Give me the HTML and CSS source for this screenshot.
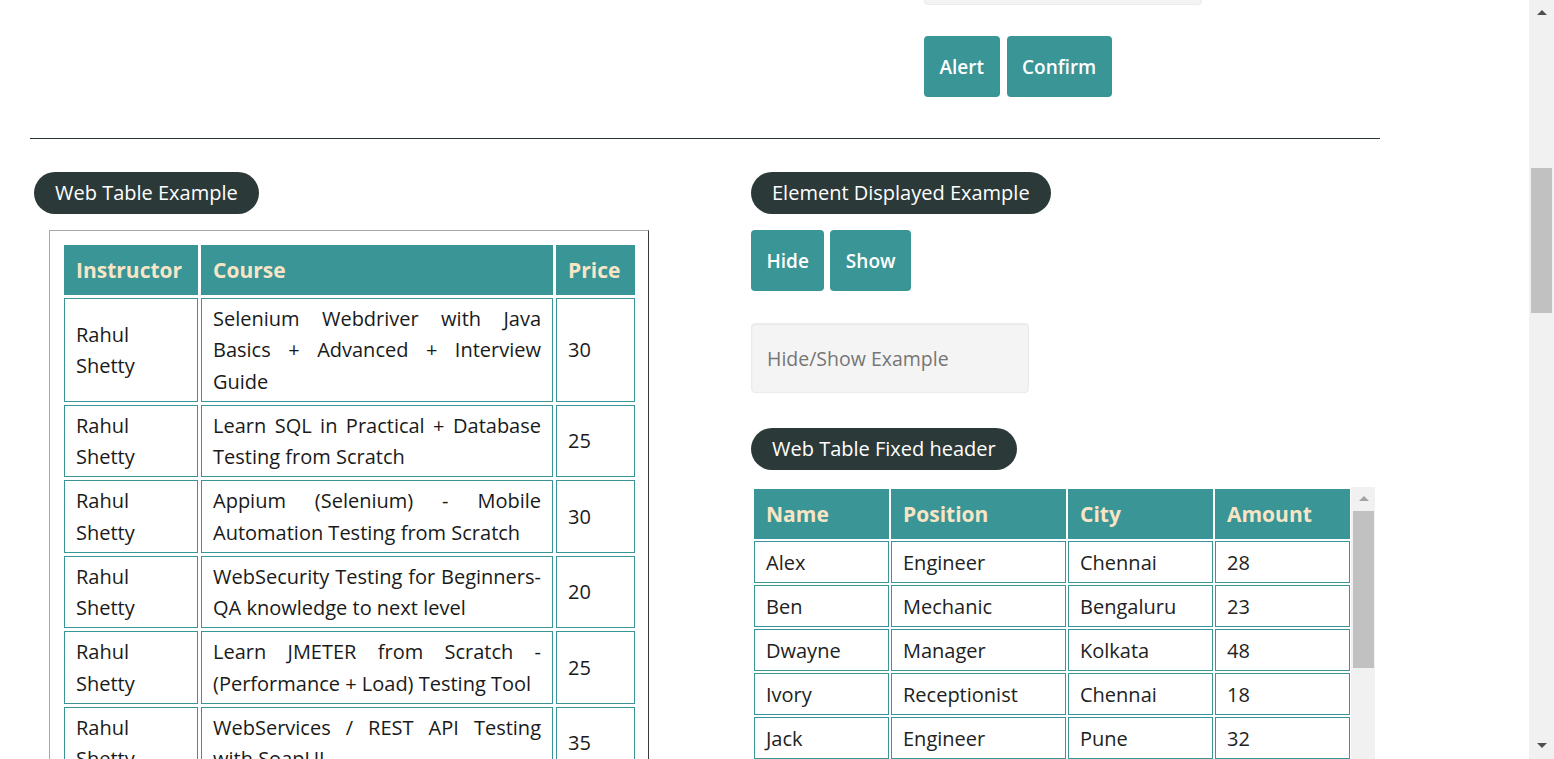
FILE: index.html
```html
<!DOCTYPE html>
<html lang="en">
<head>
<meta charset="utf-8">
<title>Practice Page</title>
<link rel="stylesheet" href="styles.css">
</head>
<body>
<div class="viewport">
  <main class="page">
    <div class="content">
      <section class="top-block">
        <input class="text-field top-field" type="text">
        <div class="btn-row top-buttons">
          <button class="btn">Alert</button>
          <button class="btn">Confirm</button>
        </div>
      </section>

      <div class="divider"></div>

      <section class="row-block">
        <div class="col-left">
          <div class="legend">Web Table Example</div>
          <div class="table-box">
            <table class="course-table">
              <thead>
                <tr>
                  <th class="c-inst">Instructor</th>
                  <th class="c-course">Course</th>
                  <th class="c-price">Price</th>
                </tr>
              </thead>
              <tbody>
                <tr><td>Rahul Shetty</td><td class="just">Selenium Webdriver with Java Basics + Advanced + Interview Guide</td><td>30</td></tr>
                <tr><td>Rahul Shetty</td><td class="just">Learn SQL in Practical + Database Testing from Scratch</td><td>25</td></tr>
                <tr><td>Rahul Shetty</td><td class="just">Appium (Selenium) - Mobile Automation Testing from Scratch</td><td>30</td></tr>
                <tr><td>Rahul Shetty</td><td class="just">WebSecurity Testing for Beginners-QA knowledge to next level</td><td>20</td></tr>
                <tr><td>Rahul Shetty</td><td class="just">Learn JMETER from Scratch - (Performance + Load) Testing Tool</td><td>25</td></tr>
                <tr><td>Rahul Shetty</td><td class="just">WebServices / REST API Testing with SoapUI</td><td>35</td></tr>
                <tr><td>Rahul Shetty</td><td class="just">QA Expert Course :Software Testing + Bugzilla + SQL + Agile</td><td>25</td></tr>
                <tr><td>Rahul Shetty</td><td class="just">Master Selenium Automation in simple Python Language</td><td>25</td></tr>
              </tbody>
            </table>
          </div>
        </div>

        <div class="col-right">
          <div class="legend">Element Displayed Example</div>
          <div class="btn-row show-buttons">
            <button class="btn">Hide</button>
            <button class="btn">Show</button>
          </div>
          <input class="text-field show-field" type="text" placeholder="Hide/Show Example">
          <div class="legend legend-fixed">Web Table Fixed header</div>
          <div class="fixed-wrap">
            <div class="fixed-scroll">
              <table class="people-table">
                <thead>
                  <tr>
                    <th class="p-name">Name</th>
                    <th class="p-pos">Position</th>
                    <th class="p-city">City</th>
                    <th class="p-amt">Amount</th>
                  </tr>
                </thead>
                <tbody>
                  <tr><td>Alex</td><td>Engineer</td><td>Chennai</td><td>28</td></tr>
                  <tr><td>Ben</td><td>Mechanic</td><td>Bengaluru</td><td>23</td></tr>
                  <tr><td>Dwayne</td><td>Manager</td><td>Kolkata</td><td>48</td></tr>
                  <tr><td>Ivory</td><td>Receptionist</td><td>Chennai</td><td>18</td></tr>
                  <tr><td>Jack</td><td>Engineer</td><td>Pune</td><td>32</td></tr>
                  <tr><td>Joe</td><td>Postman</td><td>Chennai</td><td>46</td></tr>
                </tbody>
              </table>
            </div>
            <div class="mini-scrollbar">
              <div class="mini-arrow-box"><span class="mini-arrow"></span></div>
              <div class="mini-thumb"></div>
            </div>
          </div>
        </div>
      </section>
    </div>
  </main>
  <div class="page-scrollbar">
    <div class="sb-arrow-box"><span class="sb-arrow-up"></span></div>
    <div class="sb-thumb"></div>
    <div class="sb-arrow-box sb-bottom"><span class="sb-arrow-down"></span></div>
  </div>
</div>
</body>
</html>
```

FILE: styles.css
```css
html, body {
  margin: 0;
  padding: 0;
  height: 100%;
  overflow: hidden;
  background: #ffffff;
}

body {
  font-family: "Open Sans", "Noto Sans", sans-serif;
  font-size: 20px;
  color: #1a1a1a;
}

.viewport {
  display: flex;
  height: 759px;
}

.page {
  flex: 1;
  overflow: hidden;
  padding-left: 30px;
}

.content {
  width: 1350px;
  margin-top: -65px;
}

/* ---------- top block (end of previous section) ---------- */
.top-block {
  padding-left: 894px;
}

.text-field {
  display: block;
  box-sizing: border-box;
  width: 278px;
  height: 70px;
  padding: 0 15px;
  background: #f4f4f4;
  border: 1px solid #ebebeb;
  border-radius: 4px;
  box-shadow: inset 0 1px 2px rgba(0, 0, 0, 0.05);
  font-family: inherit;
  font-size: 19.5px;
  color: #333;
  outline: none;
}

.text-field::placeholder {
  color: #767676;
}

.btn-row {
  display: flex;
  gap: 7px;
}

.top-buttons {
  margin-top: 31px;
}

.btn {
  height: 61px;
  padding: 0 15.5px;
  border: none;
  border-radius: 4px;
  background: #3a9597;
  color: #ffffff;
  font-family: inherit;
  font-size: 19px;
  font-weight: 600;
  cursor: pointer;
}

.divider {
  margin-top: 41px;
  border-top: 1px solid #263535;
}

/* ---------- two columns ---------- */
.row-block {
  margin-top: 33px;
  display: grid;
  grid-template-columns: 721px 1fr;
}

.legend {
  display: inline-block;
  height: 42px;
  line-height: 42px;
  padding: 0 21px;
  border-radius: 21px;
  background: #2c3939;
  color: #ffffff;
  font-size: 20px;
  white-space: nowrap;
}

.col-left .legend {
  margin-left: 4px;
}

.col-left,
.col-right {
  display: flex;
  flex-direction: column;
  align-items: flex-start;
}

.table-box {
  box-sizing: border-box;
  width: 600px;
  margin-top: 16px;
  margin-left: 19px;
  padding: 11px;
  border: 1px solid;
  border-color: #a6a6a6 #3a3a3a #3a3a3a #a6a6a6;
}

.course-table,
.people-table {
  border-collapse: separate;
}

.course-table {
  border-spacing: 3px;
  width: 577px;
}

.course-table th,
.people-table th {
  background: #3a9597;
  border: 1px solid #3a9597;
  color: #f8e5c6;
  font-size: 21px;
  font-weight: 700;
  text-align: left;
  line-height: 32px;
  padding: 8px 11px;
}

.course-table td,
.people-table td {
  border: 1px solid #3a9597;
  padding: 4px 11px;
  line-height: 31.25px;
  vertical-align: middle;
}

.c-inst { width: 110px; }
.c-course { width: 328px; }
.c-price { width: 55px; }

.just {
  text-align: justify;
}

/* ---------- right column ---------- */
.show-buttons {
  margin-top: 16px;
  gap: 6px;
}

.show-field {
  margin-top: 32px;
}

.legend-fixed {
  margin-top: 35px;
}

.fixed-wrap {
  display: flex;
  margin-top: 17px;
  margin-left: 1px;
  height: 300px;
  overflow: hidden;
}

.fixed-scroll {
  width: 599px;
  overflow: hidden;
}

.people-table {
  border-spacing: 2px;
  width: 600px;
}

.people-table th {
  padding: 8px 11px 8px;
}

.people-table td {
  color: #222;
  padding: 5px 11px 4px;
  line-height: 31px;
}

.p-name { width: 111px; }
.p-pos { width: 151px; }
.p-city { width: 121px; }
.p-amt { width: 111px; }

.mini-scrollbar {
  width: 24px;
  background: #f1f1f1;
  display: flex;
  flex-direction: column;
}

.mini-arrow-box {
  height: 24px;
  display: flex;
  justify-content: center;
  align-items: center;
}

.mini-arrow {
  width: 0;
  height: 0;
  border-left: 5px solid transparent;
  border-right: 5px solid transparent;
  border-bottom: 5px solid #a3a3a3;
  margin-left: 1px;
  margin-top: -2px;
}

.mini-thumb {
  height: 157px;
  margin: 0 1px 0 2px;
  background: #c1c1c1;
}

/* ---------- page scrollbar ---------- */
.page-scrollbar {
  width: 25px;
  flex: none;
  background: #f1f1f1;
  display: flex;
  flex-direction: column;
}

.sb-arrow-box {
  height: 25px;
  display: flex;
  justify-content: center;
  align-items: center;
}

.sb-arrow-up {
  width: 0;
  height: 0;
  border-left: 5px solid transparent;
  border-right: 5px solid transparent;
  border-bottom: 5px solid #505050;
}

.sb-arrow-down {
  width: 0;
  height: 0;
  border-left: 5px solid transparent;
  border-right: 5px solid transparent;
  border-top: 5px solid #505050;
}

.sb-thumb {
  margin: 143px 2px 0;
  height: 145px;
  background: #c1c1c1;
}

.sb-bottom {
  margin-top: auto;
  height: 28px;
}
```
